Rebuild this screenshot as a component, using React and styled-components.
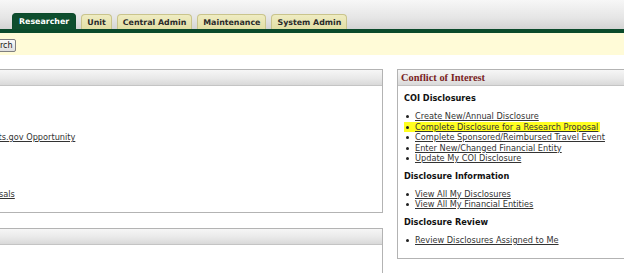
import React from "react";
import styled, { createGlobalStyle } from "styled-components";

const GlobalStyle = createGlobalStyle`
  html, body {
    margin: 0;
    padding: 0;
    background: #ffffff;
    overflow: hidden;
  }
  body {
    font-family: "DejaVu Sans", Verdana, sans-serif;
    color: #222;
  }
`;

const Page = styled.div`
  width: 624px;
  height: 273px;
  overflow: hidden;
`;

const TabStrip = styled.div`
  height: 29px;
  display: flex;
  align-items: flex-end;
  gap: 5px;
  padding-left: 12px;
  background: linear-gradient(#f7f7f7, #e6e6e6 60%, #d4d4d4);
`;

const Tab = styled.div`
  height: ${({ $active }) => ($active ? "16px" : "15px")};
  padding: 0 ${({ $active }) => ($active ? "6px" : "5px")};
  display: flex;
  align-items: center;
  box-sizing: border-box;
  border: 1px solid ${({ $active }) => ($active ? "#0c4a2b" : "#c9c48c")};
  border-bottom: none;
  border-radius: 4px 4px 0 0;
  background: ${({ $active }) =>
    $active ? "#0e4e2e" : "linear-gradient(#efecc2, #e2dea4)"};
  color: ${({ $active }) => ($active ? "#ffffff" : "#2b2b2b")};
  font-weight: bold;
  font-size: 7.9px;
  white-space: nowrap;
`;

const GreenBar = styled.div`
  height: 4px;
  background: #0b4a2b;
`;

const SearchBand = styled.div`
  height: 22px;
  background: #fffbd7;
  display: flex;
  align-items: center;
`;

const SearchButton = styled.button`
  margin-left: -19px;
  margin-top: 2px;
  height: 13px;
  padding: 0 3px;
  border: 1px solid #7f7f7f;
  border-radius: 2px;
  background: linear-gradient(#fafafa, #dedede);
  font-family: "DejaVu Sans", Verdana, sans-serif;
  font-size: 8px;
  color: #111;
  line-height: 11px;
`;

const Columns = styled.div`
  display: flex;
  align-items: flex-start;
  gap: 14px;
  padding-top: 14px;
  margin-left: -122px;
`;

const Column = styled.div`
  display: flex;
  flex-direction: column;
  gap: 15px;
  width: ${({ $width }) => $width}px;
  flex-shrink: 0;
`;

const Panel = styled.div`
  border: 1px solid #b3b3b3;
  background: #fff;
  min-height: ${({ $minHeight }) => $minHeight || 0}px;
`;

const PanelHeader = styled.div`
  height: 16px;
  box-sizing: border-box;
  border-bottom: 1px solid #c4c4c4;
  background: linear-gradient(#f6f6f6, #e9e9e9 55%, #d9d9d9);
  display: flex;
  align-items: center;
  padding-left: 3px;
  font-family: "Liberation Serif", "Times New Roman", serif;
  font-weight: bold;
  font-size: 10.4px;
  color: #7a1f1f;
`;

const PanelBody = styled.div`
  padding: 7px 6px 13px 6px;
`;

const SectionTitle = styled.div`
  font-weight: bold;
  font-size: 8.2px;
  line-height: 11px;
  color: #111;
  margin-top: ${({ $first }) => ($first ? "0" : "7px")};
`;

const LinkList = styled.ul`
  list-style: none;
  margin: 7px 0 0 0;
  padding: 0;
`;

const Item = styled.li`
  font-size: 8.2px;
  line-height: 10.5px;
  height: 10.5px;
  white-space: nowrap;
`;

const Mark = styled.span`
  display: inline-block;
  padding: 0 2px 0 1px;
  background: ${({ $highlight }) => ($highlight ? "#ffff1f" : "transparent")};
`;

const Bullet = styled.span`
  display: inline-block;
  width: 3px;
  height: 3px;
  border-radius: 50%;
  background: #222;
  margin: 0 6px 0 1px;
  vertical-align: middle;
`;

const Link = styled.a`
  color: #333;
  text-decoration: underline;
`;

const Section = ({ title, first, items }) => (
  <>
    <SectionTitle $first={first}>{title}</SectionTitle>
    <LinkList>
      {items.map((item) => (
        <Item key={item.label}>
          <Mark $highlight={item.highlight}>
            <Bullet />
            <Link href="#">{item.label}</Link>
          </Mark>
        </Item>
      ))}
    </LinkList>
  </>
);

const tabs = ["Researcher", "Unit", "Central Admin", "Maintenance", "System Admin"];

const proposalSections = [
  {
    title: "Proposals",
    items: [
      { label: "Create Proposal" },
      { label: "Create Proposal Log" },
      { label: "Create Proposal For Grants.gov Opportunity" },
      { label: "My Proposals" },
      { label: "Proposal Logs" },
    ],
  },
  {
    title: "My Proposals",
    items: [{ label: "View Development Proposals" }],
  },
];

const coiSections = [
  {
    title: "COI Disclosures",
    items: [
      { label: "Create New/Annual Disclosure" },
      { label: "Complete Disclosure for a Research Proposal", highlight: true },
      { label: "Complete Sponsored/Reimbursed Travel Event" },
      { label: "Enter New/Changed Financial Entity" },
      { label: "Update My COI Disclosure" },
    ],
  },
  {
    title: "Disclosure Information",
    items: [
      { label: "View All My Disclosures" },
      { label: "View All My Financial Entities" },
    ],
  },
  {
    title: "Disclosure Review",
    items: [{ label: "Review Disclosures Assigned to Me" }],
  },
];

export default function App() {
  return (
    <Page>
      <GlobalStyle />
      <TabStrip>
        {tabs.map((tab, i) => (
          <Tab key={tab} $active={i === 0}>
            {tab}
          </Tab>
        ))}
      </TabStrip>
      <GreenBar />
      <SearchBand>
        <SearchButton>Search</SearchButton>
      </SearchBand>
      <Columns>
        <Column $width={505}>
          <Panel>
            <PanelHeader>Proposal Development</PanelHeader>
            <PanelBody>
              {proposalSections.map((s, i) => (
                <Section key={s.title} title={s.title} first={i === 0} items={s.items} />
              ))}
            </PanelBody>
          </Panel>
          <Panel $minHeight={60}>
            <PanelHeader>Awards</PanelHeader>
          </Panel>
        </Column>
        <Column $width={260}>
          <Panel>
            <PanelHeader>Conflict of Interest</PanelHeader>
            <PanelBody>
              {coiSections.map((s, i) => (
                <Section key={s.title} title={s.title} first={i === 0} items={s.items} />
              ))}
            </PanelBody>
          </Panel>
        </Column>
      </Columns>
    </Page>
  );
}
